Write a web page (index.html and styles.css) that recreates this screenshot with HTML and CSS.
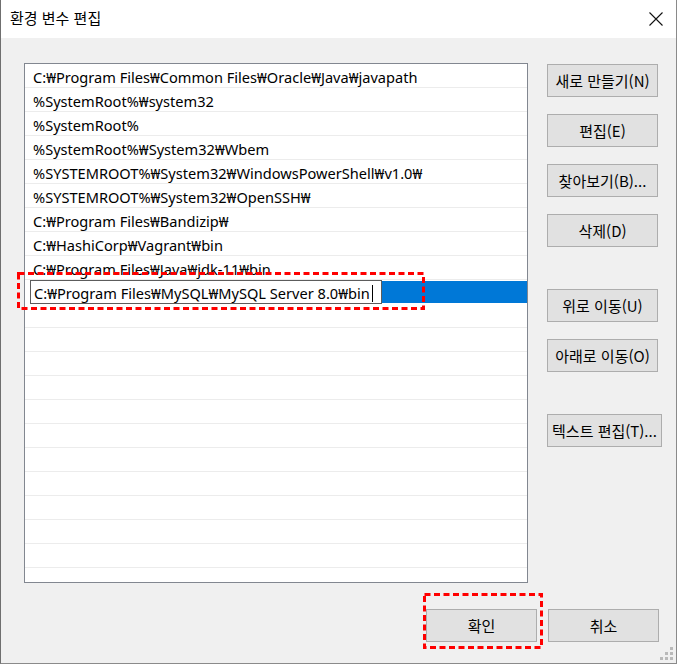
FILE: index.html
```html
<!DOCTYPE html>
<html lang="ko">
<head>
<meta charset="utf-8">
<title>환경 변수 편집</title>
<link rel="stylesheet" href="styles.css">
</head>
<body>
<div class="window">
  <div class="titlebar">
    <span class="title">환경 변수 편집</span>
    <span class="close">
      <svg width="14" height="14" viewBox="0 0 14 14"><path d="M0.5 0.5 L13.5 13.5 M13.5 0.5 L0.5 13.5" stroke="#111" stroke-width="1.1" fill="none"/></svg>
    </span>
  </div>
  <div class="main">
    <div class="list">
      <div class="row">C:₩Program Files₩Common Files₩Oracle₩Java₩javapath</div>
      <div class="row">%SystemRoot%₩system32</div>
      <div class="row">%SystemRoot%</div>
      <div class="row">%SystemRoot%₩System32₩Wbem</div>
      <div class="row">%SYSTEMROOT%₩System32₩WindowsPowerShell₩v1.0₩</div>
      <div class="row">%SYSTEMROOT%₩System32₩OpenSSH₩</div>
      <div class="row">C:₩Program Files₩Bandizip₩</div>
      <div class="row">C:₩HashiCorp₩Vagrant₩bin</div>
      <div class="row">C:₩Program Files₩Java₩jdk-11₩bin</div>
      <div class="row row-edit">
        <div class="edit">C:₩Program Files₩MySQL₩MySQL Server 8.0₩bin<span class="caret"></span></div>
        <div class="sel"></div>
      </div>
      <div class="row"></div>
      <div class="row"></div>
      <div class="row"></div>
      <div class="row"></div>
      <div class="row"></div>
      <div class="row"></div>
      <div class="row"></div>
      <div class="row"></div>
      <div class="row"></div>
      <div class="row"></div>
      <div class="row"></div>
      <div class="row"></div>
    </div>
    <div class="side">
      <button class="btn">새로 만들기(N)</button>
      <button class="btn">편집(E)</button>
      <button class="btn">찾아보기(B)...</button>
      <button class="btn">삭제(D)</button>
      <button class="btn btn-gap">위로 이동(U)</button>
      <button class="btn">아래로 이동(O)</button>
      <button class="btn btn-gap btn-wide">텍스트 편집(T)...</button>
    </div>
  </div>
  <div class="footer">
    <button class="btn">확인</button>
    <button class="btn">취소</button>
  </div>

  <svg class="focus focus-edit" width="408" height="38" viewBox="0 0 408 38"><rect x="1.5" y="1.5" width="405" height="35" fill="none" stroke="#ff0000" stroke-width="3" stroke-dasharray="6 3.5"/></svg>
  <svg class="focus focus-ok" width="120" height="56" viewBox="0 0 120 56"><rect x="1.5" y="1.5" width="117" height="53" fill="none" stroke="#ff0000" stroke-width="3" stroke-dasharray="6 3.5"/></svg>

  <svg class="grip" width="16" height="16" viewBox="0 0 16 16">
    <rect x="11" y="1" width="3" height="3" fill="#b9b9b9"/>
    <rect x="6" y="6" width="3" height="3" fill="#b9b9b9"/>
    <rect x="11" y="6" width="3" height="3" fill="#b9b9b9"/>
    <rect x="1" y="11" width="3" height="3" fill="#b9b9b9"/>
    <rect x="6" y="11" width="3" height="3" fill="#b9b9b9"/>
    <rect x="11" y="11" width="3" height="3" fill="#b9b9b9"/>
  </svg>
</div>
</body>
</html>
```
FILE: styles.css
```css
html, body {
  margin: 0;
  padding: 0;
  background: #ffffff;
}

.window {
  position: relative;
  width: 677px;
  height: 664px;
  box-sizing: border-box;
  border-left: 1px solid #6f6f6f;
  border-right: 1px solid #8a8a8a;
  border-bottom: 1px solid #8a8a8a;
  background: #f0f0f0;
  font-family: "Noto Sans", "Noto Sans CJK KR", sans-serif;
  font-size: 15px;
  color: #000;
  display: flex;
  flex-direction: column;
  overflow: hidden;
}

.titlebar {
  height: 38px;
  background: #ffffff;
  display: flex;
  align-items: center;
  justify-content: space-between;
  padding-left: 9px;
  padding-right: 13px;
  flex-shrink: 0;
}

.title {
  font-family: "Noto Sans CJK KR", sans-serif;
  font-size: 15px;
  line-height: 20px;
  padding-bottom: 2px;
}

.close {
  display: flex;
  width: 14px;
  height: 14px;
  margin-top: -1px;
}

.main {
  display: flex;
  align-items: flex-start;
  padding-top: 25px;
  padding-left: 23px;
}

.list {
  width: 504px;
  height: 520px;
  box-sizing: border-box;
  border: 1px solid #828790;
  background: #ffffff;
  overflow: hidden;
  flex-shrink: 0;
}

.row {
  height: 24px;
  box-sizing: border-box;
  border-bottom: 1px solid #ececec;
  padding-left: 8px;
  line-height: 26px;
  white-space: nowrap;
  font-size: 14.6px;
  overflow: hidden;
}

.row-edit {
  display: flex;
  padding-left: 5px;
  border-bottom: none;
  overflow: visible;
}

.edit {
  width: 352px;
  height: 24px;
  box-sizing: border-box;
  border: 1px solid #5c5c5c;
  background: #fff;
  padding-left: 3px;
  padding-top: 2px;
  line-height: 20px;
  display: flex;
  align-items: center;
}

.caret {
  display: inline-block;
  width: 1px;
  height: 17px;
  background: #000;
  margin-left: 2px;
}

.sel {
  flex: 1;
  height: 22px;
  margin-top: 1px;
  background: #0078d7;
}

.side {
  display: flex;
  flex-direction: column;
  align-items: flex-start;
  margin-left: 19px;
  padding-top: 1px;
  gap: 17px;
}

.btn {
  width: 111px;
  height: 33px;
  box-sizing: border-box;
  border: 1px solid #adadad;
  background: #e1e1e1;
  font-family: "Noto Sans CJK KR", "Noto Sans", sans-serif;
  font-size: 15px;
  color: #000;
  padding: 0;
  margin: 0;
  white-space: nowrap;
  display: flex;
  align-items: center;
  justify-content: center;
}

.btn-gap {
  margin-top: 25px;
}

.btn-wide {
  width: 115px;
}

.footer {
  display: flex;
  justify-content: flex-end;
  gap: 11px;
  padding-top: 26px;
  padding-right: 17px;
}

.footer .btn {
  width: 111px;
}

.focus {
  position: absolute;
  display: block;
}

.focus-edit {
  left: 16px;
  top: 272px;
}

.focus-ok {
  left: 422px;
  top: 593px;
}

.grip {
  position: absolute;
  right: 1px;
  bottom: 1px;
  display: block;
}
```
